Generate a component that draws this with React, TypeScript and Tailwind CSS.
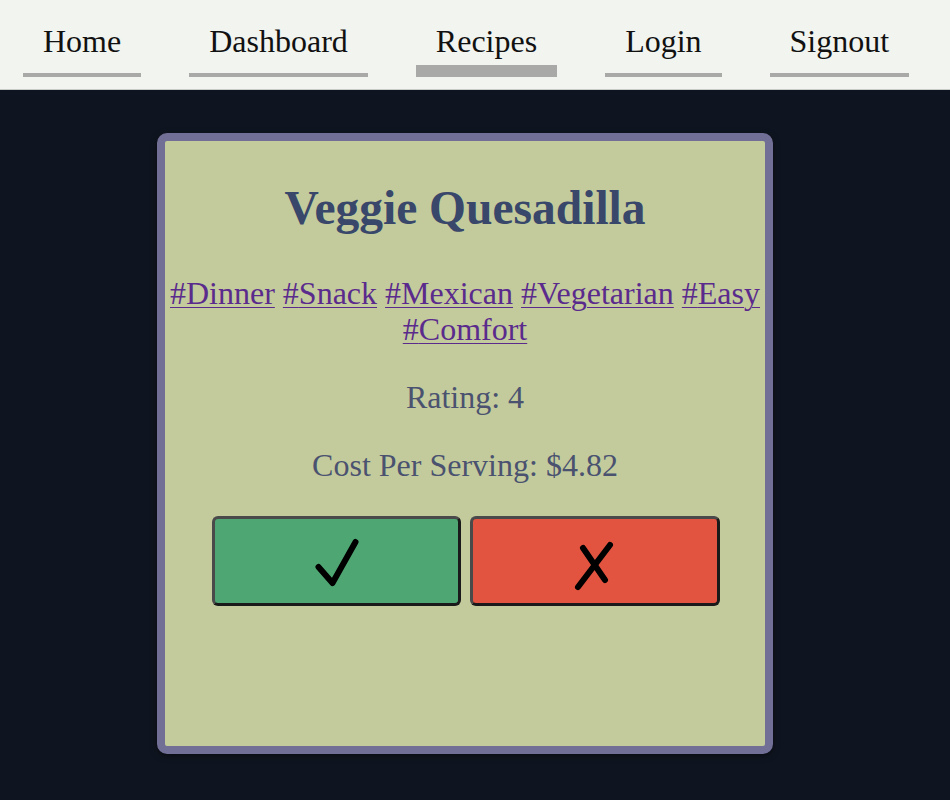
import React from "react";

const navItems = [
  { label: "Home", active: false },
  { label: "Dashboard", active: false },
  { label: "Recipes", active: true },
  { label: "Login", active: false },
  { label: "Signout", active: false },
];

const tags = ["Dinner", "Snack", "Mexican", "Vegetarian", "Easy", "Comfort"];

export default function App() {
  return (
    <div
      className="min-h-screen bg-[#0f1520]"
      style={{ fontFamily: '"Liberation Serif", "Times New Roman", serif' }}
    >
      <nav className="h-[90px] bg-[#f2f4ef] pt-[23px] pl-[23px] flex gap-[48px] border-b border-[#c9cbc6]">
        {navItems.map((item) => (
          <a key={item.label} href="#" className="flex flex-col px-5 text-[32px] leading-[36px] text-[#111111] no-underline">
            <span className="text-center">{item.label}</span>
            {item.active ? (
              <span className="mt-[6px] h-[12px] bg-[#a9aaa7] -mx-5" />
            ) : (
              <span className="mt-[14px] h-[4px] bg-[#a9aaa7] -mx-5" />
            )}
          </a>
        ))}
      </nav>

      <div className="ml-[157px] mt-[43px] w-[616px] h-[621px] border-[8px] border-[#726f96] rounded-[10px] bg-[#c3cb9c] shadow-[0_2px_6px_rgba(0,0,0,0.5)] flex flex-col items-center">
        <h2 className="mt-[40px] text-[47.5px] leading-[54px] font-bold text-[#38476a]">
          Veggie Quesadilla
        </h2>
        <p className="mt-[40px] text-[32px] leading-[36px] text-center px-1">
          {tags.map((t, i) => (
            <React.Fragment key={t}>
              <a href="#" className="text-[#5a2a8c] underline decoration-1 underline-offset-[3px]">
                #{t}
              </a>
              {i < tags.length - 1 ? " " : ""}
            </React.Fragment>
          ))}
        </p>
        <p className="mt-[32px] text-[32px] leading-[36px] text-[#4a5270]">Rating: 4</p>
        <p className="mt-[32px] text-[32px] leading-[36px] text-[#4a5270]">Cost Per Serving: $4.82</p>
        <div className="mt-[33px] flex gap-[9px] ml-[2px]">
          <button className="w-[249px] h-[90px] rounded-[6px] bg-[#4ea773] border-[3px] border-[#1a1a1a] border-t-[#4a4a4a] border-l-[#4a4a4a] flex items-center justify-center">
            <svg width="60" height="60" viewBox="0 0 60 60" fill="none">
              <path d="M11.5 36 L25.5 52 L48.5 11" stroke="#000" strokeWidth="6" strokeLinecap="round" strokeLinejoin="round" />
            </svg>
          </button>
          <button className="w-[250px] h-[90px] rounded-[6px] bg-[#e25440] border-[3px] border-[#1a1a1a] border-t-[#4a4a4a] border-l-[#4a4a4a] flex items-center justify-center">
            <svg width="60" height="60" viewBox="0 0 60 60" fill="none">
              <path d="M18 17 L40 49" stroke="#000" strokeWidth="6" strokeLinecap="round" />
              <path d="M13 56 L45 14" stroke="#000" strokeWidth="6" strokeLinecap="round" />
            </svg>
          </button>
        </div>
      </div>
    </div>
  );
}
